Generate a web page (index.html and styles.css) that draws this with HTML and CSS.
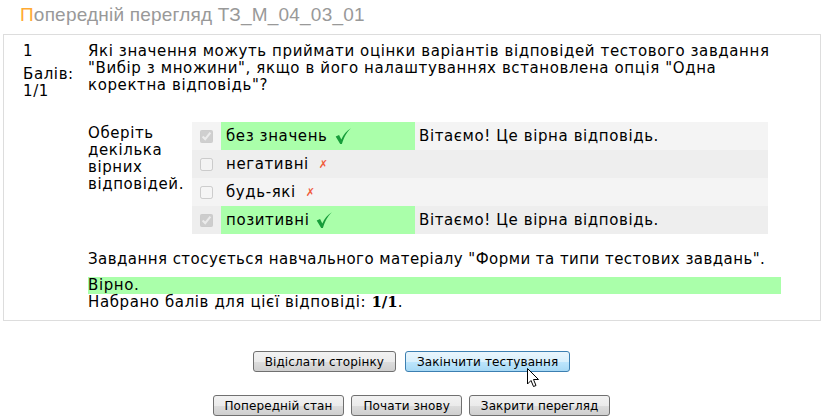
FILE: index.html
```html
<!DOCTYPE html>
<html lang="uk">
<head>
  <meta charset="UTF-8" />
  <title>Попередній перегляд ТЗ_М_04_03_01</title>
  <link rel="stylesheet" href="styles.css">
</head>
<body>
  <h2 class="title"><span class="first">П</span>опередній перегляд ТЗ_М_04_03_01</h2>

  <div class="que">
    <div class="info">
      <div class="no">1</div>
      <div class="grade">Балів:<br>1/1</div>
    </div>
    <div class="content">
      <div class="qtext">Які значення можуть приймати оцінки варіантів відповідей тестового завдання "Вибір з множини", якщо в його налаштуваннях встановлена опція "Одна коректна відповідь"?</div>

      <div class="ablock">
        <div class="prompt">Оберіть декілька вірних відповідей.</div>
        <div class="answers">
          <div class="row r0">
            <span class="cb"><input type="checkbox" checked disabled></span>
            <span class="lbl correct">без значень <svg class="tick" viewBox="0 0 16 16"><path d="M1.5 8.5 L4.5 7 L6.5 11 C8.5 6.5 11 3.5 15 1 C11.5 4.5 9 8.5 7 15 L5.5 15 Z" fill="#179d3a"/></svg></span>
            <span class="fb">Вітаємо! Це вірна відповідь.</span>
          </div>
          <div class="row r1">
            <span class="cb"><input type="checkbox" disabled></span>
            <span class="lbl">негативні <span class="cross">✗</span></span>
            <span class="fb"></span>
          </div>
          <div class="row r0">
            <span class="cb"><input type="checkbox" disabled></span>
            <span class="lbl">будь-які <span class="cross">✗</span></span>
            <span class="fb"></span>
          </div>
          <div class="row r1">
            <span class="cb"><input type="checkbox" checked disabled></span>
            <span class="lbl correct">позитивні <svg class="tick" viewBox="0 0 16 16"><path d="M1.5 8.5 L4.5 7 L6.5 11 C8.5 6.5 11 3.5 15 1 C11.5 4.5 9 8.5 7 15 L5.5 15 Z" fill="#179d3a"/></svg></span>
            <span class="fb">Вітаємо! Це вірна відповідь.</span>
          </div>
        </div>
      </div>

      <div class="gfb">Завдання стосується навчального матеріалу "Форми та типи тестових завдань".</div>
      <div class="right">Вірно.</div>
      <div class="score">Набрано балів для цієї відповіді: <b>1/1</b>.</div>
    </div>
  </div>

  <div class="controls">
    <button>Відіслати сторінку</button>
    <button class="hover">Закінчити тестування</button>
  </div>
  <div class="controls second">
    <button>Попередній стан</button>
    <button>Почати знову</button>
    <button>Закрити перегляд</button>
  </div>

  <svg class="pointer" width="13" height="20" viewBox="0 0 13 20"><path d="M0.5 0.5 L0.5 16 L4 12.5 L6.5 18.5 L9 17.5 L6.5 11.5 L11.5 11.5 Z" fill="#fff" stroke="#000" stroke-width="1"/></svg>
</body>
</html>
```

FILE: styles.css
```css
body {
  margin: 0;
  font-family: "DejaVu Sans", Verdana, sans-serif;
  font-size: 15px;
  letter-spacing: 0.6px;
  color: #000;
  background: #fff;
  position: relative;
}
.title {
  margin: 0;
  padding: 4px 0 0 20px;
  height: 30px;
  font-family: "Liberation Sans", Arial, sans-serif;
  font-weight: normal;
  font-size: 19px;
  letter-spacing: 0.2px;
  color: #999;
}
.title .first {
  color: #ffaa33;
}
.que {
  margin: 0 2px 0 3px;
  border: 1px solid #ddd;
  display: flex;
}
.info {
  width: 65px;
  padding: 8px 0 0 19px;
  line-height: 17px;
}
.info .grade {
  margin-top: 6px;
}
.content {
  flex: 1;
  padding: 8px 39px 9px 0;
  line-height: 17px;
}
.ablock {
  display: flex;
  margin-top: 28px;
}
.prompt {
  width: 94px;
  padding: 3px 10px 0 0;
}
.answers {
  width: 576px;
}
.row {
  display: grid;
  grid-template-columns: 29px 194px 1fr;
  height: 28px;
  align-items: stretch;
}
.row.r0 {
  background: #f4f4f4;
}
.row.r1 {
  background: #eeeeee;
}
.cb {
  display: flex;
  align-items: center;
  justify-content: center;
}
.cb input {
  margin: 0;
  width: 13px;
  height: 13px;
}
.lbl {
  display: flex;
  align-items: center;
  padding-left: 5px;
  gap: 4px;
}
.lbl.correct {
  background: #aaffaa;
}
.fb {
  display: flex;
  align-items: center;
  padding-left: 4px;
}
.tick {
  width: 18px;
  height: 18px;
  margin-left: 2px;
}
.cross {
  color: #f05a3a;
  font-size: 11px;
  margin-left: 6px;
}
.gfb {
  margin-top: 17px;
  letter-spacing: 0.45px;
}
.right {
  margin-top: 9px;
  background: #aaffaa;
}
.score b {
  font-family: "DejaVu Serif", serif;
  letter-spacing: 0;
}
.controls {
  display: flex;
  justify-content: center;
  gap: 9px;
  margin-top: 30px;
}
.controls.second {
  margin-top: 23px;
  gap: 7px;
}
.controls button {
  height: 21px;
  padding: 0 11px;
  font-family: "DejaVu Sans", Tahoma, sans-serif;
  font-size: 12px;
  letter-spacing: 0.1px;
  color: #000;
  border: 1px solid #707070;
  border-radius: 3px;
  background: linear-gradient(#f2f2f2 0%, #ebebeb 50%, #dddddd 51%, #cfcfcf 100%);
}
.controls button.hover {
  border-color: #3c7fb1;
  background: linear-gradient(#eaf6fd 0%, #d9f0fc 50%, #bee6fd 51%, #a7d9f5 100%);
}
.pointer {
  position: absolute;
  left: 527px;
  top: 368px;
}
```
